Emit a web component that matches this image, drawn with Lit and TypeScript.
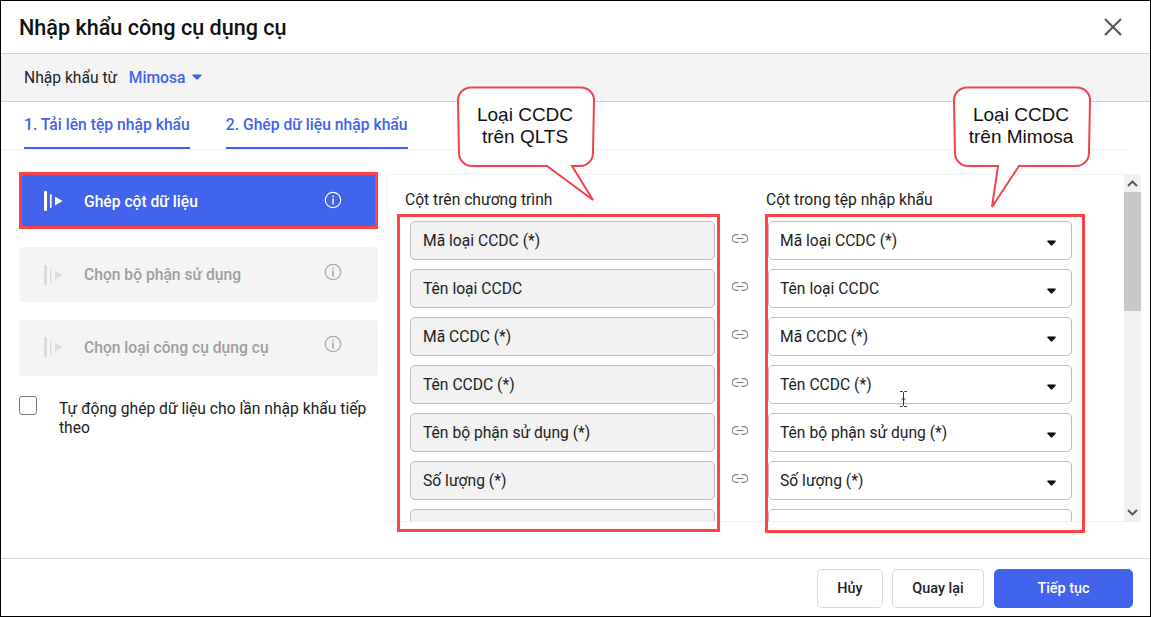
import { LitElement, html, css, svg } from "lit";
import { customElement } from "lit/decorators.js";

const FIELDS = ["Mã loại CCDC (*)", "Tên loại CCDC", "Mã CCDC (*)", "Tên CCDC (*)", "Tên bộ phận sử dụng (*)", "Số lượng (*)", ""];
const STEPS = [
  { label: "Ghép cột dữ liệu", cls: "active" },
  { label: "Chọn bộ phận sử dụng", cls: "off one" },
  { label: "Chọn loại công cụ dụng cụ", cls: "off two" },
];

const stepIcon = svg`<svg class="sicon" width="20" height="22" viewBox="0 0 20 22"><rect x="0" y="1" width="3" height="20" rx="1" fill="currentColor"/><rect x="6" y="4" width="1.6" height="14" rx=".8" fill="currentColor"/><path d="M11 6.5 L18.5 11 L11 15.5 Z" fill="currentColor"/></svg>`;
const infoIcon = svg`<svg class="info" width="18" height="18" viewBox="0 0 18 18" fill="none"><circle cx="9" cy="9" r="7.7" stroke="currentColor" stroke-width="1.2"/><rect x="8.3" y="7.5" width="1.5" height="6" fill="currentColor"/><rect x="8.3" y="4.6" width="1.5" height="1.6" fill="currentColor"/></svg>`;
const linkIcon = svg`<svg width="16" height="9" viewBox="0 0 16 9" fill="none" stroke="#808080" stroke-width="1.2"><path d="M6.5 .7H4a3.8 3.8 0 0 0 0 7.6h2.5"/><path d="M9.5 .7H12a3.8 3.8 0 0 1 0 7.6H9.5"/><path d="M4.5 4.5h7"/></svg>`;
const caretIcon = svg`<svg width="9" height="6" viewBox="0 0 10 6" preserveAspectRatio="none"><path d="M1 .5h8a.7.7 0 0 1 .5 1.2L5.5 5.4a.8.8 0 0 1-1 0L.5 1.7A.7.7 0 0 1 1 .5Z" fill="#000"/></svg>`;

@customElement("app-root")
export class AppRoot extends LitElement {
  static styles = css`
    :host { display: block; width: 1151px; height: 617px; font-family: Roboto, "Liberation Sans", sans-serif; color: #212121; }
    * { box-sizing: border-box; }
    .win { position: relative; width: 1151px; height: 617px; border: 1px solid #000; background: #fff; display: flex; flex-direction: column; overflow: hidden; }
    .head { height: 53px; flex: none; display: flex; align-items: center; justify-content: space-between; padding: 0 28px 0 18px; border-bottom: 1px solid #d4d4d4; }
    .head h1 { margin: 0; font-size: 21.6px; font-weight: 500; color: #111; }
    .close { display: block; }
    .sub { height: 48px; flex: none; display: flex; align-items: center; padding: 0 0 1px 23px; background: #f4f4f4; border-bottom: 1px solid #d0d0d0; font-size: 15.65px; }
    .sub .src { margin-left: 11.5px; font-weight: 500; color: #4263eb; }
    .sub svg { margin-left: 7px; }
    .tabs { height: 48px; flex: none; display: flex; gap: 36px; margin-right: 22px; padding-left: 23px; border-bottom: 1px solid #f1f1f1; }
    .tab { height: 47px; padding-top: 14px; border-bottom: 2px solid #4263eb; color: #4263eb; font-size: 15.7px; font-weight: 500; line-height: 18px; white-space: nowrap; }
    .body { height: 409px; flex: none; display: flex; border-bottom: 1px solid #d5dae0; }
    .left { width: 386px; flex: none; padding: 22px 0 0 18px; display: flex; flex-direction: column; align-items: flex-start; }
    .step { width: 359px; height: 56px; margin-bottom: 18px; display: flex; align-items: center; padding-left: 25px; font-size: 15.65px; font-weight: 500; border-radius: 3px; }
    .step .name { margin-left: 20px; flex: 1; }
    .step .info { margin-right: 36px; margin-top: -6px; }
    .step.active { height: 57px; background: #4263eb; color: #fff; border: 3px solid #ff4245; border-radius: 0; padding: 1px 0 0 22px; }
    .step.active .info { margin-right: 33px; margin-top: -3px; }
    .step.off { background: #f4f4f4; color: #9e9e9e; }
    .step.one { height: 55px; }
    .step.two { margin-bottom: 20px; padding-bottom: 2px; }
    .step.off .sicon { color: #dcdcdc; }
    .step.off .info { color: #a5a5a5; }
    .auto { display: flex; width: 359px; font-size: 15.65px; line-height: 19px; }
    .box { width: 18px; height: 19px; flex: none; border: 1px solid #777; border-radius: 3px; background: #fff; }
    .auto span { margin-left: 22px; padding-top: 3px; }
    .panel { width: 754px; height: 348px; margin-top: 24px; flex: none; display: flex; border-left: 1px solid #f1f1f1; border-top: 1px solid #f1f1f1; border-bottom: 1px solid #efefef; position: relative; }
    .content { flex: 1; overflow: hidden; padding: 0 0 0 17px; }
    .titles { display: flex; height: 46px; font-size: 15.65px; align-items: center; padding-top: 3px; }
    .titles div:first-child { width: 361px; }
    .row { display: flex; align-items: center; height: 39px; margin-bottom: 9px; padding-left: 5px; }
    .fld { height: 39px; border: 1px solid #bdbdbd; border-radius: 5px; font-size: 15.65px; display: flex; align-items: center; padding: 0 12px 1px; }
    .fld.ro { width: 305px; background: #f2f2f2; }
    .lnk { width: 53px; flex: none; display: flex; justify-content: center; padding: 0 3px 4px 0; }
    .fld.sel { width: 304px; justify-content: space-between; padding-left: 11px; padding-right: 15px; }
    .fld.sel svg { margin-top: 5px; }
    .bar { width: 17px; flex: none; background: #f1f1f1; display: flex; flex-direction: column; align-items: center; }
    .bar .btn { height: 17px; display: flex; align-items: center; justify-content: center; flex: none; }
    .bar .thumb { width: 17px; height: 119px; background: #c8c8c8; flex: none; }
    .bar .sp { flex: 1; }
    .foot { flex: 1; display: flex; justify-content: flex-end; align-items: flex-start; padding: 10px 17px 0 0; gap: 9px; }
    .b { height: 39px; border: 1px solid #d5dae0; border-radius: 5px; background: #fff; font-size: 14.4px; font-weight: 500; display: flex; align-items: center; justify-content: center; color: #212121; }
    .b.h { width: 66px; }
    .b.q { width: 92px; }
    .b.n { width: 139px; margin-left: 1px; background: #4263eb; border-color: #4263eb; color: #fff; }
    .mark { position: absolute; border: 3px solid #ff4245; pointer-events: none; }
    .mark.a { left: 396px; top: 213px; width: 323px; height: 318px; }
    .mark.b2 { left: 764px; top: 213px; width: 320px; height: 319px; }
    .bubble { position: absolute; top: 83px; width: 146px; height: 130px; }
    .bubble svg { position: absolute; left: 0; top: 0; }
    .bubble .t { position: absolute; left: 3px; top: 20px; width: 136px; text-align: center; font-family: "Liberation Sans", Arial, sans-serif; font-size: 19px; line-height: 22px; color: #111; }
    .bubble.q { left: 453px; }
    .bubble.m { left: 949px; }
    .cursor { position: absolute; left: 898px; top: 390px; }
  `;

  render() {
    return html`<div class="win">
      <div class="head">
        <h1>Nhập khẩu công cụ dụng cụ</h1>
        <svg class="close" width="18" height="18" viewBox="0 0 18 18" stroke="#555" stroke-width="2.1" fill="none"><path d="M1 1l16 16M17 1L1 17"/></svg>
      </div>
      <div class="sub">
        <span>Nhập khẩu từ</span><span class="src">Mimosa</span>
        <svg width="10" height="6" viewBox="0 0 10 6"><path d="M1 .5h8a.7.7 0 0 1 .5 1.2L5.5 5.4a.8.8 0 0 1-1 0L.5 1.7A.7.7 0 0 1 1 .5Z" fill="#4263eb"/></svg>
      </div>
      <div class="tabs">
        <div class="tab">1. Tải lên tệp nhập khẩu</div>
        <div class="tab">2. Ghép dữ liệu nhập khẩu</div>
      </div>
      <div class="body">
        <div class="left">
          ${STEPS.map((s) => html`<div class="step ${s.cls}">${stepIcon}<span class="name">${s.label}</span>${infoIcon}</div>`)}
          <div class="auto"><div class="box"></div><span>Tự động ghép dữ liệu cho lần nhập khẩu tiếp theo</span></div>
        </div>
        <div class="panel">
          <div class="content">
            <div class="titles"><div>Cột trên chương trình</div><div>Cột trong tệp nhập khẩu</div></div>
            ${FIELDS.map((f) => html`<div class="row">
              <div class="fld ro">${f}</div>
              <div class="lnk">${linkIcon}</div>
              <div class="fld sel"><span>${f}</span>${f ? caretIcon : ""}</div>
            </div>`)}
          </div>
          <div class="bar">
            <div class="btn"><svg width="11" height="7" viewBox="0 0 11 7" fill="none" stroke="#5a5a5a" stroke-width="2"><path d="M1 6l4.5-4.5L10 6"/></svg></div>
            <div class="thumb"></div>
            <div class="sp"></div>
            <div class="btn"><svg width="11" height="7" viewBox="0 0 11 7" fill="none" stroke="#5a5a5a" stroke-width="2"><path d="M1 1l4.5 4.5L10 1"/></svg></div>
          </div>
        </div>
      </div>
      <div class="foot">
        <div class="b h">Hủy</div>
        <div class="b q">Quay lại</div>
        <div class="b n">Tiếp tục</div>
      </div>
      <div class="mark a"></div>
      <div class="mark b2"></div>
      <div class="bubble q">
        <svg width="146" height="130" viewBox="0 0 146 130" fill="#fff" stroke="#f0444a" stroke-width="2"><path d="M17 3.5H127a13 13 0 0 1 13 13L139 69a13 13 0 0 1-13 13H118L139 116L93 82H18a13 13 0 0 1-13-13L4 16.5A13 13 0 0 1 17 3.5Z"/></svg>
        <div class="t">Loại CCDC<br />trên QLTS</div>
      </div>
      <div class="bubble m">
        <svg width="146" height="130" viewBox="0 0 146 130" fill="#fff" stroke="#f0444a" stroke-width="2"><path d="M17 3.5H127a13 13 0 0 1 13 13L139 69a13 13 0 0 1-13 13H69L42 123L48 82H18a13 13 0 0 1-13-13L4 16.5A13 13 0 0 1 17 3.5Z"/></svg>
        <div class="t">Loại CCDC<br />trên Mimosa</div>
      </div>
      <svg class="cursor" width="9" height="16" viewBox="0 0 9 16" fill="none" stroke="#333" stroke-width="1"><path d="M1 .5h2.5l1 1 1-1H8M4.5 1.5v13M1 15.5h2.5l1-1 1 1H8M2.5 8h4"/></svg>
    </div>`;
  }
}
